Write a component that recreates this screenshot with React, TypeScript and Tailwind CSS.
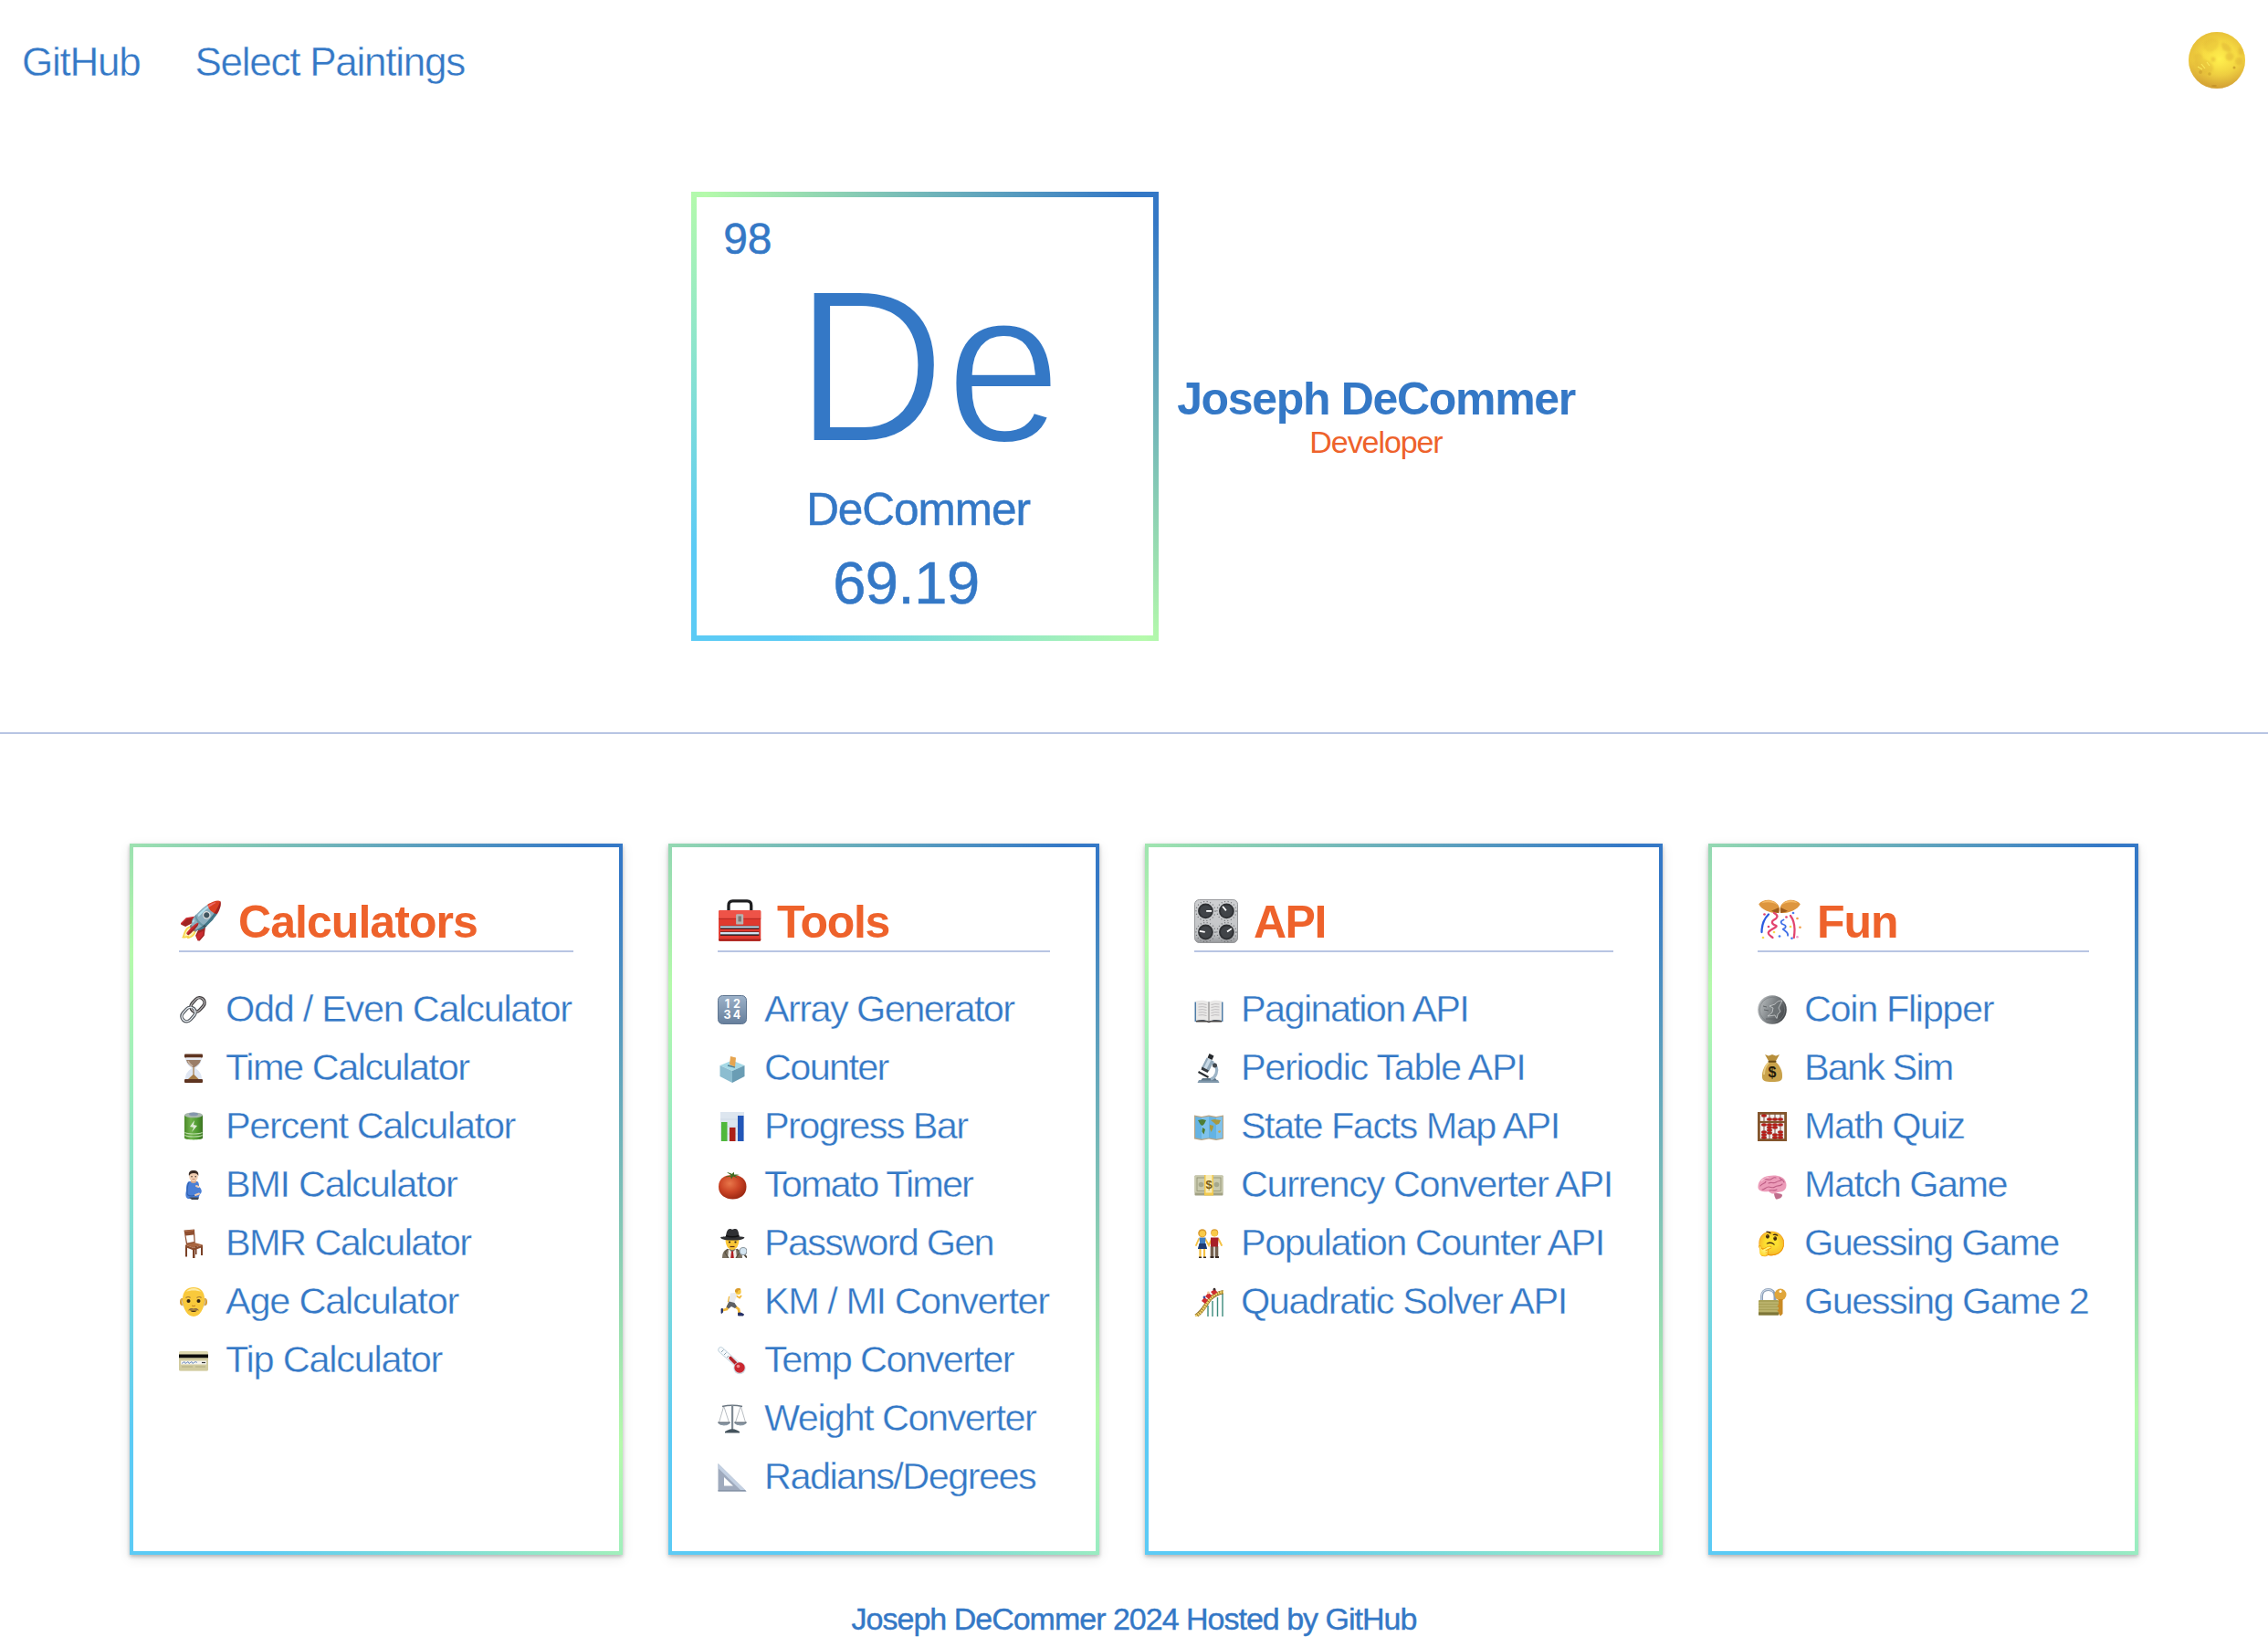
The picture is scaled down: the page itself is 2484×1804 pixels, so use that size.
import type { ReactNode } from 'react';

function Svg({ children, className = 'size-8' }: { children: ReactNode; className?: string }) {
  return (
    <svg viewBox="0 0 32 32" className={className} aria-hidden="true">
      {children}
    </svg>
  );
}

function Moon() {
  return (
    <svg viewBox="0 0 62 62" className="size-[62px]" aria-label="Full moon">
      <defs>
        <linearGradient id="moonBase" x1="0" y1="0" x2="0" y2="1">
          <stop offset="0" stopColor="#f0cf3c" />
          <stop offset="0.5" stopColor="#f7da42" />
          <stop offset="1" stopColor="#cf9c35" />
        </linearGradient>
        <radialGradient id="moonGlow" cx="0.55" cy="0.48" r="0.5">
          <stop offset="0" stopColor="#fff04e" />
          <stop offset="0.6" stopColor="#f8df45" stopOpacity="0.5" />
          <stop offset="1" stopColor="#d9a835" stopOpacity="0.4" />
        </radialGradient>
        <filter id="moonSoft"><feGaussianBlur stdDeviation="1.1" /></filter>
        <clipPath id="moonClip"><circle cx="31" cy="31" r="31" /></clipPath>
      </defs>
      <g clipPath="url(#moonClip)">
        <rect width="62" height="62" fill="url(#moonBase)" />
        <rect width="62" height="62" fill="url(#moonGlow)" />
        <g filter="url(#moonSoft)" fill="#dcb034" opacity="0.5">
          <path d="M17 11c4-5 12-5 16-1 1 5-3 10-8 12-6 1-10-5-8-11Z" opacity="0.6" />
          <path d="M6 26c4-5 9-3 10 3 4 2 10 4 11 10 1 5-5 8-10 6-5-1-8-6-10-10Z" opacity="0.75" />
          <path d="M36 12c5-1 10 3 11 9-3 2-8 0-10-3Z" />
          <circle cx="45" cy="27" r="4.5" />
          <ellipse cx="57" cy="21" rx="2.5" ry="4" />
          <circle cx="55" cy="32" r="4" />
          <circle cx="27" cy="30" r="2.5" />
        </g>
        <g fill="#b98924" opacity="0.6">
          <circle cx="50" cy="39" r="1.5" />
          <circle cx="13" cy="44" r="2" opacity="0.6" />
          <circle cx="23" cy="46" r="1.8" opacity="0.6" />
          <ellipse cx="28" cy="59" rx="3" ry="1" />
        </g>
        <path d="m14 35 4 5M20 33l3 4M10 38l5 3" stroke="#fae85a" strokeWidth="1.2" />
      </g>
    </svg>
  );
}

const art: Record<string, ReactNode> = {
  link: (
    <Svg>
      <g fill="none" strokeWidth="3.6">
        <rect x="-8.5" y="-5.5" width="17" height="11" rx="5.5" transform="translate(20.5 10.5) rotate(-48)" stroke="#3f3b3c" />
        <rect x="-8.5" y="-5.5" width="17" height="11" rx="5.5" transform="translate(10.5 21) rotate(-48)" stroke="#50565c" />
      </g>
      <g fill="none" strokeWidth="1.2">
        <rect x="-8.5" y="-5.5" width="17" height="11" rx="5.5" transform="translate(20.5 10.5) rotate(-48)" stroke="#b9b6b8" />
        <rect x="-8.5" y="-5.5" width="17" height="11" rx="5.5" transform="translate(10.5 21) rotate(-48)" stroke="#f2f7fc" />
      </g>
    </Svg>
  ),
  hourglass: (
    <Svg>
      <path d="M7 4h18c0 6-3 9-7 12 4 3 7 6 7 12H7c0-6 3-9 7-12-4-3-7-6-7-12Z" fill="#dfe6f2" />
      <path d="M8 7h16c-1 4-4 6-7 8h-2C12 13 9 11 8 7Z" fill="#9a7d67" />
      <path d="M10 8c1 3 3 4 5 6" stroke="#c9b5a4" strokeWidth="1.5" fill="none" />
      <path d="M15.4 15h1.2v8l5 5H10l5.4-5Z" fill="#a57b45" />
      <rect x="6" y="0.5" width="20" height="4" rx="1" fill="#5e3420" />
      <rect x="8" y="4.5" width="16" height="1.2" fill="#f2eeee" />
      <rect x="6" y="28" width="20" height="4" rx="1" fill="#5e3420" />
    </Svg>
  ),
  battery: (
    <Svg>
      <defs>
        <linearGradient id="bat" x1="0" x2="1">
          <stop offset="0" stopColor="#4c8a2b" /><stop offset="0.35" stopColor="#6fb24a" />
          <stop offset="0.7" stopColor="#4f9a30" /><stop offset="1" stopColor="#3c7422" />
        </linearGradient>
      </defs>
      <path d="M6 3.5v25C6 31 26 31 26 28.500v-25Z" fill="url(#bat)" />
      <ellipse cx="16" cy="3.4" rx="10" ry="2.900" fill="#a9b8ae" />
      <ellipse cx="16" cy="2.400" rx="5" ry="1.800" fill="#8597ad" />
      <path d="m17 9-5 7 4 1-2 5 6-7-4-1Z" fill="#dcead4" />
      <path d="M6.500 22.500c4 2 15 2 19 0M6.500 25.500c4 2 15 2 19 0" stroke="#b9dba6" strokeWidth="1.200" fill="none" />
    </Svg>
  ),
  pregnant: (
    <Svg>
      <path d="M11 12h9c2 1 2 4 2 6 3 2 4 6 1 8l-2 5H10c-3-1-3-5-2-9 0-4 0-8 3-10Z" fill="#4a7fd6" />
      <path d="M11 13c-2 3-2 8-2 12 0 2 2 3 5 3l6-1" stroke="#2f5fae" strokeWidth="1.1" fill="none" />
      <path d="M13 10h6v3q-3 2-6 0Z" fill="#d9ab8c" />
      <ellipse cx="16" cy="6.500" rx="4.800" ry="5.500" fill="#f0cdb2" />
      <path d="M11 6C10 1 13 0 16 0s6 1 5.200 6c-1-2-2-3-5-3s-4 1-5.200 3Z" fill="#3a2b26" />
      <circle cx="14" cy="6.800" r="0.700" fill="#30231e" /><circle cx="18.200" cy="6.800" r="0.700" fill="#30231e" />
      <path d="M14.500 9.500h3" stroke="#b87e6a" strokeWidth="0.800" />
      <path d="m19 17 2.500 1M18 27l4-1.500" stroke="#f0cdb2" strokeWidth="2" strokeLinecap="round" />
      <path d="M11 29.500h11l-1 2.500h-7Z" fill="#404855" />
    </Svg>
  ),
  chair: (
    <Svg>
      <path d="M5.500 1.500 17 .5l.8 15L8 17.500Z" fill="#8f4f30" />
      <path d="m7.500 7.500 8.500-1 .5 7.500-7.500 1.500Z" fill="#fff" />
      <path d="m6.500 2.500 9.500-1" stroke="#b87450" />
      <path d="m7 17.500 10-2.500 9 2.500-10 3.500Z" fill="#a9653f" />
      <path d="M7 18h2v12.500H7ZM15 21h2.500v11H15ZM24 18.500h2V29h-2ZM18 19h1.500v9H18Z" fill="#7a4126" />
      <path d="m7 17.500 9 3.500 10-3.500V20l-10 3.500L7 20Z" fill="#8a4c2d" />
    </Svg>
  ),
  oldman: (
    <Svg>
      <ellipse cx="3.500" cy="16" rx="2.500" ry="4" fill="#d99a2b" />
      <ellipse cx="28.500" cy="16" rx="2.500" ry="4" fill="#d99a2b" />
      <path d="M4 13C4 4 9 0 16 0s12 4 12 13c0 10-5 19-12 19S4 23 4 13Z" fill="#f9c93c" />
      <path d="M8 5c2-3 5-4 8-4s6 1 8 4c-4-2-12-2-16 0Z" fill="#fdeaa2" />
      <path d="M3 12c1 5 2 8 3 11l-2-3c-1-3-2-6-1-8ZM29 12c-1 5-2 8-3 11l2-3c1-3 2-6 1-8Z" fill="#cfc6b2" />
      <circle cx="10.500" cy="15" r="2" fill="#2e2215" /><circle cx="21.500" cy="15" r="2" fill="#2e2215" />
      <path d="M7.500 11.500q3-2 5 0M19.500 11.500q3-2 5 0" stroke="#a67c38" strokeWidth="1.200" fill="none" />
      <path d="M14 20q2 1.500 4 0" stroke="#c07d1f" fill="none" />
      <path d="M10 25.500c2-3 4-2.500 6-2 2-.5 4-1 6 2-3-1-9-1-12 0Z" fill="#8d6c43" />
      <path d="M12 25.500h8q-4 3-8 0Z" fill="#3b2414" />
    </Svg>
  ),
  card: (
    <Svg>
      <rect x="0" y="6" width="32" height="21.500" rx="1.500" fill="#dcd7ae" />
      <path d="M0 14h32v12a1.500 1.500 0 0 1-1.500 1.500h-29A1.500 1.500 0 0 1 0 26Z" fill="#c9c394" opacity="0.6" />
      <rect y="9.500" width="32" height="3.800" fill="#0d0d0b" />
      <rect x="2" y="16.500" width="28" height="4" fill="#f5f4ee" />
      <path d="m3 19.500 3-2 1 2 3-2 1 2 3-2 1 2 3-2 2 1" stroke="#6c8bc0" strokeWidth="0.900" fill="none" />
      <path d="M25 18.500h4" stroke="#333" strokeWidth="1.200" />
      <path d="M3 23h12M18 23h11" stroke="#a9a47d" strokeWidth="0.800" />
    </Svg>
  ),
  toolbox: (
    <Svg className="size-12">
      <path d="M8 8V4.500C8 2 9 1.200 11 1.200h10.500c2 0 3 .8 3 3.300V8" stroke="#1d1d1f" strokeWidth="2.200" fill="none" />
      <rect x="0.700" y="8" width="30.800" height="22.500" rx="1" fill="#e0392f" />
      <path d="M.7 9a1 1 0 0 1 1-1h28.800a1 1 0 0 1 1 1v5H.7Z" fill="#ee5348" />
      <path d="M.7 14.200h30.800" stroke="#a32019" strokeWidth="0.500" />
      <rect x="2" y="19.300" width="28.200" height="2.400" fill="#16181d" /><rect x="2" y="19.600" width="28.200" height="1.300" fill="#cfe0ee" />
      <rect x="2" y="23.700" width="28.200" height="2.800" fill="#16181d" /><rect x="2" y="24" width="28.200" height="1.600" fill="#cfe0ee" />
      <rect x="13.400" y="10.800" width="5.400" height="7.600" rx="0.800" fill="#b7b3b1" /><rect x="15" y="12.300" width="2.300" height="4" fill="#7d7774" />
      <path d="M.7 29h30.800v.5a1 1 0 0 1-1 1H1.700a1 1 0 0 1-1-1Z" fill="#a8211a" />
    </Svg>
  ),
  numbers: (
    <Svg>
      <defs>
        <linearGradient id="num" x1="0" y1="0" x2="0" y2="1">
          <stop offset="0" stopColor="#9db2c9" /><stop offset="1" stopColor="#667f9c" />
        </linearGradient>
      </defs>
      <rect x="0.500" y="0.500" width="31" height="31" rx="5" fill="url(#num)" stroke="#5f7590" />
      <g fill="#fff" fontFamily="Inter, sans-serif" fontWeight="700" fontSize="12.500" textAnchor="middle">
        <text x="10.500" y="14.300">1</text><text x="21" y="14.300">2</text>
        <text x="10.500" y="26.300">3</text><text x="21" y="26.300">4</text>
      </g>
    </Svg>
  ),
  ballot: (
    <Svg>
      <path d="M16 7.500 29.500 13 16 19 2.500 13Z" fill="#a5d9e6" />
      <path d="M2.500 13 16 19v13L2.500 25Z" fill="#8cbdd0" />
      <path d="M29.500 13 16 19v13l13.500-7Z" fill="#6a9db4" />
      <path d="m11 13 8 2" stroke="#4e7d91" strokeWidth="1.500" />
      <path d="m14 3 6 1.500-1 10-6-2.500Z" fill="#e6a550" />
    </Svg>
  ),
  bars: (
    <Svg>
      <rect x="3" y="0" width="26" height="32" fill="#dde6ef" />
      <path d="M3 8h26M3 16h26M3 24h26" stroke="#c8d3df" strokeWidth="0.600" />
      <rect x="4" y="11" width="6.500" height="21" fill="#4fb83c" />
      <rect x="13" y="17" width="6.500" height="15" fill="#ac2017" />
      <rect x="22" y="4" width="6.500" height="28" fill="#2356b8" />
    </Svg>
  ),
  tomato: (
    <Svg>
      <defs>
        <radialGradient id="tom" cx="0.400" cy="0.350" r="0.700">
          <stop offset="0" stopColor="#e8774a" /><stop offset="0.500" stopColor="#cc4526" /><stop offset="1" stopColor="#96240f" />
        </radialGradient>
      </defs>
      <path d="M1 18C1 9 7 5 16 5s15.500 4 15.500 13S24 31.500 16.500 31.500 1 27 1 18Z" fill="url(#tom)" />
      <path d="M15 6c-1-2-4-3-5-4 2 0 4 1 6 2 0-1 1-2 2-2l0 2.500c2 0 4-.5 6 .5-2 0-3 1-5 1l3 2.500-5-2-2 3-1-3c-2 0-3 1-6 1 2-1 4-2 7-2Z" fill="#3f6b22" />
    </Svg>
  ),
  detective: (
    <Svg>
      <path d="M5 32c0-6 2-9 6-10h10c4 1 6 4 6 10Z" fill="#7c7263" />
      <path d="m12 22 4 4 4-4 1 10H11Z" fill="#f0efec" />
      <path d="m15 25 1-1 1 1 .8 7h-3.600Z" fill="#b01f24" />
      <path d="m11 22-3 4 4 6M21 22l3 4-4 6" stroke="#57503f" strokeWidth="1.200" fill="none" />
      <path d="M8.500 11h15c0 7-3 12-7.500 12s-7.500-5-7.500-12Z" fill="#f9c534" />
      <circle cx="13" cy="14.500" r="1.100" fill="#2b2119" /><circle cx="19.500" cy="14.500" r="1.100" fill="#2b2119" />
      <path d="M13.500 19.500h5" stroke="#5d2f16" strokeWidth="1.200" />
      <path d="M3 9.500C5 8 8 9 9 8c.5-5 2-8 4.500-8 1 0 1.500.7 2.500.7S18 0 19.500 0C22 0 23 3 23.500 8c1 1 4 0 6 1.500-1 2.500-7 3-13 3S4 12 3 9.500Z" fill="#2f3033" />
      <path d="M9 7.500q7 2.500 14.500 0" stroke="#111" strokeWidth="1.500" fill="none" />
      <path d="m29 28 3 3.500" stroke="#4b4338" strokeWidth="1.800" />
      <circle cx="28" cy="24.500" r="4" fill="#d5e6f2" stroke="#8c979e" strokeWidth="1.200" />
    </Svg>
  ),
  runner: (
    <Svg>
      <path d="m13 18-3 6-6 1.500" stroke="#f2b93a" strokeWidth="2.800" fill="none" />
      <path d="m18 20 5 4 1 5.500" stroke="#f2b93a" strokeWidth="2.800" fill="none" />
      <path d="m13 10-1 5 5-2M19 8.500l5 3 2-2.500" stroke="#f2b93a" strokeWidth="2" fill="none" />
      <path d="m14 6.500 5-.5 2 3-3 8.500-6-1.500Z" fill="#e8eaee" />
      <path d="m12.500 15.500 6 1.500 2.500 4-2 2-4-2-3 2.500-2.500-2Z" fill="#5e6064" />
      <circle cx="22.500" cy="4.800" r="3.200" fill="#f6c640" />
      <path d="M19 5c-.5-3 2-4.500 4.500-4 2 .3 2 1.500 1.500 2-2 0-3 .5-3.500 3Z" fill="#d99b2c" />
      <path d="M4 23.500h1.500v4L4 28.500ZM22.500 28h3l3 1.500-.5 1.500h-5.500Z" stroke="#1f2a5c" strokeWidth="0.800" fill="#26336e" />
    </Svg>
  ),
  thermometer: (
    <Svg>
      <path d="M3.500 4.500 22 21" stroke="#c9d8e2" strokeWidth="6.500" strokeLinecap="round" />
      <path d="M3.500 4.500 22 21" stroke="#f7fafc" strokeWidth="4.500" strokeLinecap="round" />
      <path d="m14 13.500 9 9" stroke="#b3242a" strokeWidth="3.600" strokeLinecap="round" />
      <path d="m4 7 2.500-2.500M7 10l2.500-2.500M10 13l2-2" stroke="#7f98a8" strokeWidth="0.900" />
      <circle cx="24" cy="24.500" r="6.700" fill="#cfdbe3" />
      <circle cx="24" cy="24" r="5.700" fill="#cb2730" />
      <circle cx="22.500" cy="22.500" r="1.800" fill="#f08a8e" />
    </Svg>
  ),
  scales: (
    <Svg>
      <path d="M5 2.500q11-2.500 22 0" stroke="#6c7782" strokeWidth="1.300" fill="none" />
      <rect x="15" y="1" width="2.200" height="27" fill="#7f8a94" />
      <path d="M6.500 3 1.500 20M7 3l5.500 17M25 3l-5.500 17M25.500 3l5 17" stroke="#9aa1a8" strokeWidth="0.700" fill="none" />
      <path d="M.3 20h13.400c-1 4.500-12.400 4.500-13.400 0ZM18.300 20h13.400c-1 4.500-12.400 4.500-13.400 0Z" fill="#8b98a4" />
      <path d="M.3 20h13.400M18.300 20h13.400" stroke="#4d5862" strokeWidth="0.900" />
      <path d="M11 28.500q5-2.500 10 0l3 1.500v1.500H8V30Z" fill="#44535d" />
    </Svg>
  ),
  ruler: (
    <Svg>
      <path fillRule="evenodd" d="M.5 1 31.500 31.500H.5ZM7 16v9.500h10Z" fill="#9faabd" />
      <path d="M.5 1 31.500 31.500h-5L.5 6Z" fill="#c3d0e2" />
      <path d="M.5 30h29.500l1.500 1.500H.5Z" fill="#8794a8" />
    </Svg>
  ),
  knobs: (
    <Svg className="size-12">
      <defs>
        <linearGradient id="knb" x1="0" y1="0" x2="0" y2="1">
          <stop offset="0" stopColor="#cfd0d2" /><stop offset="0.800" stopColor="#c2c4c6" /><stop offset="1" stopColor="#97999c" />
        </linearGradient>
      </defs>
      <rect x="0.300" y="0.300" width="31.400" height="31.400" rx="3.500" fill="url(#knb)" stroke="#8b8c8e" strokeWidth="0.600" />
      {[[8.300, 8.600, 0], [23.600, 8.600, -130], [8.300, 24, -170], [23.600, 24, -35]].map(([x, y, a]) => (
        <g key={`${x}-${y}`}>
          <circle cx={x} cy={y} r="7" fill="none" stroke="#6d6f72" strokeWidth="0.800" strokeDasharray="0.700 1.700" />
          <circle cx={x} cy={y} r="5.600" fill="#2f3134" />
          <circle cx={x} cy={y} r="4.300" fill="#414448" />
          <path d="M.5 0h4" transform={`translate(${x} ${y}) rotate(${a})`} stroke="#fff" strokeWidth="1.200" />
        </g>
      ))}
    </Svg>
  ),
  confetti: (
    <Svg className="size-12">
      <path d="M.8 3.500C4-.5 12-1 15.500 5c.8 2 .5 4 0 5C10 10.500 3 8 .8 3.500Z" fill="#dd963f" />
      <path d="M31.200 3.500C28-.5 20-1 16.800 5c-.8 2-.5 4 0 5 5.200.5 12.200-2 14.400-6.500Z" fill="#dd963f" />
      <path d="M3 2.800C6-.2 12 .5 14.500 4 11 2 7 1.800 3 2.800ZM29 2.800C26-.2 20 .5 17.800 4c3.200-2 7.200-2.200 11.200-1.200Z" fill="#f2b966" />
      <path d="M10 8.500c2 1 4 1.300 5.500 1.500V6ZM22 8.500c-2 1-4 1.300-5.200 1.500V6Z" fill="#9a5a1c" />
      <g fill="none" strokeLinecap="round" strokeWidth="1.500">
        <path d="M8 11c-3 3-5 8-5 13" stroke="#2b5be0" />
        <path d="M12 10c4 2 2 4 0 5s-2 3 1 4-4 3-5 5 2 3 3 4" stroke="#e2456f" />
        <path d="M19 15c-3 1-2 3 0 3.500s2 2.500 0 3 4 2 3 5" stroke="#3f6fe6" strokeWidth="1.200" />
        <path d="M24 12c3 4 3.500 10 2.500 16" stroke="#e2456f" />
      </g>
      {[[5, 11, '#e2456f'], [21, 13, '#e2456f'], [29, 14, '#f3a04b'], [8, 20, '#e2456f'], [31, 20.500, '#f3a04b'], [4, 28, '#f6d94c'], [16, 27, '#4a7df0'], [25, 28.500, '#4a7df0'], [29, 27.500, '#f09ad0'], [24, 20, '#f6d94c'], [26, 10, '#4a7df0'], [12, 24, '#f6d94c']].map(([x, y, c]) => (
        <circle key={`${x}-${y}`} cx={x} cy={y} r="0.900" fill={c as string} />
      ))}
    </Svg>
  ),
  book: (
    <Svg>
      <path d="M.5 7.500h31V29h-31Z" fill="#4e7ca6" />
      <path d="M2 6.500c5-1.500 10-1 14 1 4-2 9-2.500 14-1V28c-5-1-10-1-14 1-4-2-9-2-14-1Z" fill="#e9e8e7" />
      <path d="M16 7.500V29" stroke="#8d8b8b" strokeWidth="1.200" />
      <path d="M4.500 10q5-1 9 .5M4.500 13q5-1 9 .5M4.500 16q5-1 9 .5M4.500 19q5-1 9 .5M4.500 22q5-1 9 .5M27.500 10q-5-1-9 .5M27.500 13q-5-1-9 .5M27.500 16q-5-1-9 .5M27.500 19q-5-1-9 .5M27.500 22q-5-1-9 .5" stroke="#b5b3b5" strokeWidth="0.800" fill="none" />
      <path d="M2 28c5-1.200 10-1 14 .8 4-1.800 9-2 14-.8v1.500H18q-2 1.500-4 0H2Z" fill="#474443" />
    </Svg>
  ),
  microscope: (
    <Svg>
      <path d="M5 29h21l1.500 3h-24Z" fill="#7f97ab" />
      <path d="M9 27h14l2 2.500H7Z" fill="#5f7688" />
      <path d="M19 10c5 2 7 7 5 12-1 3-3 5-6 6" stroke="#9db4c6" strokeWidth="3.200" fill="none" />
      <path d="m5 19 11 6-1 2-11-6Z" fill="#2b2f33" />
      <path d="m13.500 4.500 8 4-5.500 11-8-4Z" fill="#93a9ba" />
      <path d="m15.500 5.500 3 1.500-5.500 11-3-1.500Z" fill="#c8d9e6" />
      <path d="m8.500 14.500 7.500 4-1.500 2.500-7-3.500Z" fill="#33383d" />
      <path d="m16.500 0 5 2.500-2 4.500-5-2.500Z" fill="#26292d" />
      <circle cx="22.500" cy="13" r="2.500" fill="#43494f" />
    </Svg>
  ),
  map: (
    <Svg>
      <path d="M0 3.500 8 5l8-1.500L24 5l8-1.500v26L24 31l-8-1.500L8 31l-8-1.500Z" fill="#b8a585" />
      <path d="M1.200 5 8 6.300 16 5l8 1.300L30.800 5v23.200L24 29.500l-8-1.300-8 1.300-6.800-1.300Z" fill="#63b3e4" />
      <path d="M8 6.300 16 5v23.200l-8 1.300ZM24 6.300 30.800 5v23.200L24 29.500Z" fill="#8ac9ef" opacity="0.700" />
      <path d="m4 9 5-1 4 1-2 4-2 2-2-1ZM9 17l3 2-1.500 5.500-2-3Z" fill="#4d7d34" />
      <path d="m18 9 4-1 7 1-2 4-3 1-2-2ZM17 14l4 1-.5 3-2 4-1.500-4Z" fill="#a8993f" />
      <path d="m26 21 2.500-1 .5 2-2 1Z" fill="#d9a53a" />
    </Svg>
  ),
  money: (
    <Svg>
      <rect x="0.500" y="5.500" width="31" height="22" rx="0.800" fill="#a2a284" />
      <rect x="0.500" y="5.500" width="31" height="19" rx="0.800" fill="#c9caae" />
      <rect x="3" y="8" width="26" height="14.500" fill="none" stroke="#8e9072" strokeWidth="0.800" />
      <circle cx="7.500" cy="15.500" r="2.800" fill="#a5a88b" /><circle cx="24.500" cy="15.500" r="2.800" fill="#a5a88b" />
      <rect x="11" y="5" width="10" height="22.500" fill="#f2c94c" /><rect x="12.500" y="5" width="7" height="19.500" fill="#f8ecb5" />
      <text x="16" y="20" textAnchor="middle" fontSize="13" fontWeight="700" fontFamily="Liberation Sans" fill="#7a5c12">$</text>
    </Svg>
  ),
  couple: (
    <Svg>
      <path d="M6.500 20v11M11 20v11" stroke="#f5c242" strokeWidth="2.200" />
      <path d="M19.500 19v11.500M24.500 19v11.500" stroke="#75614f" strokeWidth="3.600" />
      <path d="M5 11 2 18M12 11l4 7 3-7M26.500 11l3.500 7" stroke="#f5c242" strokeWidth="1.900" fill="none" strokeLinecap="round" />
      <path d="M5.500 9.500h7L12 15l2 7H4l2-7Z" fill="#3e7ec2" />
      <path d="m5.500 16h7l1.500 6H4Z" fill="#1e3d73" />
      <path d="M18 9.500h8.500L26 19.500h-8Z" fill="#a81f26" />
      <circle cx="8.800" cy="4.800" r="4.600" fill="#d99c30" /><circle cx="9" cy="5.300" r="3.200" fill="#f9cb48" />
      <circle cx="22.200" cy="4.300" r="4" fill="#d99c30" /><circle cx="22.200" cy="5" r="3.400" fill="#f9cb48" />
      <path d="M5 30.500h3v1.500H5ZM10 30.500h3v1.500h-3ZM17.500 30h4v2h-4ZM23 30h4v2h-4Z" fill="#3a2d26" />
    </Svg>
  ),
  coaster: (
    <Svg>
      <path d="M15 20v12M20 15v17M25.500 11v21M31 7v25" stroke="#3c8c7c" strokeWidth="1.400" />
      <path d="M1.500 31.500C10 27 13 17 18 12s9-6 14-7" stroke="#8a6a24" strokeWidth="4.200" fill="none" />
      <path d="M1.500 31.500C10 27 13 17 18 12s9-6 14-7" stroke="#efd26b" strokeWidth="3" fill="none" strokeDasharray="2 0.700" />
      <path d="m8 15 3-4 4 3-3 4ZM12 10l3.500-4 4 3-3.500 4ZM18 5l4.500-3 3 3.500-4.500 3Z" fill="#cf2c30" />
      <circle cx="11" cy="11" r="1.400" fill="#3a4a9c" /><circle cx="15.500" cy="6" r="1.400" fill="#f3c79b" /><circle cx="22" cy="2.200" r="1.400" fill="#3d2d2d" />
    </Svg>
  ),
  coin: (
    <Svg>
      <defs>
        <linearGradient id="coi" x1="0" y1="0" x2="1" y2="0.400">
          <stop offset="0" stopColor="#c2c5c7" /><stop offset="0.450" stopColor="#8f9497" /><stop offset="1" stopColor="#4a4d50" />
        </linearGradient>
      </defs>
      <circle cx="16" cy="16" r="15.800" fill="url(#coi)" />
      <circle cx="16" cy="16" r="13.800" fill="none" stroke="#777c7f" strokeWidth="0.700" />
      <path d="M27 6c-4 0-6 1-8 4l-6 2 4 2-1 5-5 4 8-1 2 4 1-5 3-3-2-4Z" fill="#6d7275" stroke="#d6d8da" strokeWidth="0.700" />
      <path d="m6 12 4 1M7 16l5 1M9 26h14" stroke="#5e6366" />
    </Svg>
  ),
  bag: (
    <Svg>
      <path d="m8 1 4 1.500L16 1l4 1.500L24 1l-4.500 8h-7Z" fill="#b78f3b" />
      <path d="M12.500 9h7c5 4 8 10 7.500 17-.3 4-3 5-11 5s-10.700-1-11-5C4.500 19 7.500 13 12.500 9Z" fill="#c9a24b" />
      <path d="M12 10c-4 4-5 8-5 13" stroke="#e8ca80" strokeWidth="1.800" fill="none" />
      <rect x="11.500" y="7.800" width="9" height="2" rx="1" fill="#6b4d17" />
      <text x="16" y="26" textAnchor="middle" fontSize="16" fontWeight="700" fontFamily="Liberation Sans" fill="#241a0a">$</text>
    </Svg>
  ),
  abacus: (
    <Svg>
      <rect x="1.400" y="1.400" width="29.200" height="29.200" fill="#f3eeec" stroke="#83552c" strokeWidth="2.800" />
      <path d="M7 2v28M13 2v28M19 2v28M25 2v28" stroke="#7a4a40" strokeWidth="1" />
      <path d="M1 11h30" stroke="#83552c" strokeWidth="2.200" />
      <g fill="#c01f19" stroke="#7d1510" strokeWidth="0.400">
        {[[7, 4], [13, 8], [19, 8], [25, 8], [7, 14], [7, 22], [7, 25], [7, 28], [13, 14], [13, 17], [13, 20], [13, 23], [19, 14], [19, 17], [19, 25], [19, 28], [25, 14], [25, 22], [25, 25], [25, 28]].map(([x, y]) => (
          <rect key={`${x}-${y}`} x={x - 2.600} y={y - 1.300} width="5.200" height="2.600" rx="0.900" />
        ))}
      </g>
    </Svg>
  ),
  brain: (
    <Svg>
      <path d="M18 25c3 0 8 0 9 2 0 3-4 4.500-7 4.500-1-2-2-4-2-6.500Z" fill="#c06d8c" />
      <path d="M.5 19C0 12 5 7 12 6c8-1.500 17 0 19 7 1.500 5-.5 9-4 10-3 1-5 .5-7 2-3 1.500-6 0-8-2-4 1-11 0-11.500-4Z" fill="#ec9cb9" />
      <g stroke="#bf5f86" strokeWidth="1.100" fill="none" strokeLinecap="round">
        <path d="M3 17c2-3 5-2 6-5M7 9c3 0 4 2 7 1s3-3 6-2M12 14c3-2 5 1 8-1s5-1 7-3M5 21c3 0 4-3 7-3s4 2 7 0 5 0 8-3M13 22c3-1 5 1 8-1M24 8c1 2 4 2 5 5" />
      </g>
      <path d="M4 12c2-3 5-4 8-4.500" stroke="#f8c6d7" strokeWidth="1.200" fill="none" />
    </Svg>
  ),
  lock: (
    <Svg>
      <path d="M4.500 15V10C4.500 0 19 0 19 10v5" stroke="#8da0b8" strokeWidth="3" fill="none" />
      <path d="M4.200 15V10C4.500 2 13 .5 17 5" stroke="#c9d6e6" strokeWidth="1.100" fill="none" />
      <rect x="1" y="14" width="22" height="16.500" rx="1" fill="#a9a158" />
      <path d="M1 17h22M1 20h22M1 23h22M1 26h22" stroke="#c8c07c" strokeWidth="1" />
      <rect x="1" y="27.500" width="22" height="3" fill="#7d7538" />
      <circle cx="25" cy="8" r="6.500" fill="#e0a63b" /><circle cx="25" cy="4.500" r="1.500" fill="#fff" />
      <path d="M23 13h4.500v16L25 31.500 23 29v-2l-1.500-1.500L23 24v-2l-1.500-1.500L23 19Z" fill="#c98a25" />
    </Svg>
  ),
};

type IconProps = { art?: string; emoji?: string };

function ItemIcon({ art: name, emoji }: IconProps) {
  return (
    <span className="mt-1 flex size-8 shrink-0 items-center justify-center font-['Noto_Color_Emoji'] text-[26px] leading-none">
      {name ? art[name] : emoji}
    </span>
  );
}

type Item = IconProps & { label: string; tracking: string };
type Section = { title: string; titleTracking: string; width: string; art?: string; emoji?: string; items: Item[] };

const sections: Section[] = [
  {
    title: 'Calculators', titleTracking: 'tracking-[-0.95px]', width: 'w-[540px]', emoji: '🚀',
    items: [
      { label: 'Odd / Even Calculator', tracking: 'tracking-[-1.3px]', art: 'link' },
      { label: 'Time Calculator', tracking: 'tracking-[-1.5px]', art: 'hourglass' },
      { label: 'Percent Calculator', tracking: 'tracking-[-1.35px]', art: 'battery' },
      { label: 'BMI Calculator', tracking: 'tracking-[-1.33px]', art: 'pregnant' },
      { label: 'BMR Calculator', tracking: 'tracking-[-1.57px]', art: 'chair' },
      { label: 'Age Calculator', tracking: 'tracking-[-1.22px]', art: 'oldman' },
      { label: 'Tip Calculator', tracking: 'tracking-[-1.24px]', art: 'card' },
    ],
  },
  {
    title: 'Tools', titleTracking: 'tracking-[-1.33px]', width: 'w-[472px]', art: 'toolbox',
    items: [
      { label: 'Array Generator', tracking: 'tracking-[-1.6px]', art: 'numbers' },
      { label: 'Counter', tracking: 'tracking-[-1.7px]', art: 'ballot' },
      { label: 'Progress Bar', tracking: 'tracking-[-1.65px]', art: 'bars' },
      { label: 'Tomato Timer', tracking: 'tracking-[-1.95px]', art: 'tomato' },
      { label: 'Password Gen', tracking: 'tracking-[-1.78px]', art: 'detective' },
      { label: 'KM / MI Converter', tracking: 'tracking-[-1.48px]', art: 'runner' },
      { label: 'Temp Converter', tracking: 'tracking-[-1.58px]', art: 'thermometer' },
      { label: 'Weight Converter', tracking: 'tracking-[-1.56px]', art: 'scales' },
      { label: 'Radians/Degrees', tracking: 'tracking-[-1.56px]', art: 'ruler' },
    ],
  },
  {
    title: 'API', titleTracking: 'tracking-[-1.5px]', width: 'w-[567px]', art: 'knobs',
    items: [
      { label: 'Pagination API', tracking: 'tracking-[-1.65px]', art: 'book' },
      { label: 'Periodic Table API', tracking: 'tracking-[-1.37px]', art: 'microscope' },
      { label: 'State Facts Map API', tracking: 'tracking-[-1.56px]', art: 'map' },
      { label: 'Currency Converter API', tracking: 'tracking-[-1.43px]', art: 'money' },
      { label: 'Population Counter API', tracking: 'tracking-[-1.53px]', art: 'couple' },
      { label: 'Quadratic Solver API', tracking: 'tracking-[-1.42px]', art: 'coaster' },
    ],
  },
  {
    title: 'Fun', titleTracking: 'tracking-[-1.04px]', width: 'w-[471px]', art: 'confetti',
    items: [
      { label: 'Coin Flipper', tracking: 'tracking-[-1.38px]', art: 'coin' },
      { label: 'Bank Sim', tracking: 'tracking-[-1.9px]', art: 'bag' },
      { label: 'Math Quiz', tracking: 'tracking-[-1.5px]', art: 'abacus' },
      { label: 'Match Game', tracking: 'tracking-[-1.54px]', art: 'brain' },
      { label: 'Guessing Game', tracking: 'tracking-[-1.62px]', emoji: '🤔' },
      { label: 'Guessing Game 2', tracking: 'tracking-[-1.54px]', art: 'lock' },
    ],
  },
];

function Card({ section }: { section: Section }) {
  return (
    <section
      className={`${section.width} h-[779px] shrink-0 border-4 px-[50px] pt-[51px] shadow-[0_2px_4px_rgba(0,0,0,0.24),0_4px_12px_rgba(0,0,0,0.1)] [border-image:linear-gradient(45deg,#5ccbf5_10%,#b5faab_50%,#3478c6_97%)_1]`}
    >
      <h2 className="flex h-16 items-start gap-[17px] border-b-2 border-[#b8c5e3] text-[50px] leading-[62px] font-bold text-[#ee622b]">
        <span className="mt-1.5 flex size-12 shrink-0 items-center justify-center font-['Noto_Color_Emoji'] text-[40px] leading-none font-normal">
          {section.art ? art[section.art] : section.emoji}
        </span>
        <span className={section.titleTracking}>{section.title}</span>
      </h2>
      <ul className="mt-[29px]">
        {section.items.map((item) => (
          <li key={item.label} className="flex h-16 items-center gap-[19px]">
            <ItemIcon art={item.art} emoji={item.emoji} />
            <a className={`${item.tracking} pt-0.5 text-[41.5px] leading-[62px] whitespace-nowrap [-webkit-text-stroke:0.4px_#fff]`}>{item.label}</a>
          </li>
        ))}
      </ul>
    </section>
  );
}

export default function App() {
  return (
    <div className="h-[1804px] overflow-hidden bg-white font-['Liberation_Sans',Arial,sans-serif] text-[#3478c6]">
      <header className="flex h-[132px] items-center justify-between pr-[25px] pl-6">
        <nav className="flex gap-[60px] pt-[3px] text-[44px] leading-[60px] [-webkit-text-stroke:0.4px_#fff]">
          <a className="tracking-[-1.25px]">GitHub</a>
          <a className="tracking-[-1.25px]">Select Paintings</a>
        </nav>
        <Moon />
      </header>

      <div className="flex h-[672px] items-start justify-center gap-5 border-b-2 border-[#b8c5e3] pt-[78px] pr-[2px]">
        <div className="h-[492px] w-[512px] border-[6px] pt-[18px] [border-image:linear-gradient(45deg,#5ccbf5_10%,#b5faab_50%,#3478c6_97%)_1]">
          <div className="ml-[29px] text-[48px] leading-[56px] [-webkit-text-stroke:0.5px_#3478c6]">98</div>
          <div className="ml-[108px] origin-left scale-x-95 pt-[3px] text-[240px] leading-[217px] [-webkit-text-stroke:4px_#fff]">De</div>
          <div className="mt-[20px] ml-[120px] text-[49.5px] leading-[56px] tracking-[-1.02px] [-webkit-text-stroke:0.5px_#3478c6]">DeCommer</div>
          <div className="mt-[15px] ml-[149px] text-[65px] leading-[76px] tracking-[-0.4px] [-webkit-text-stroke:0.6px_#3478c6]">69.19</div>
        </div>
        <div className="flex h-[492px] flex-col items-center justify-center">
          <h1 className="text-[50px] leading-[56px] font-bold tracking-[-1.33px]">Joseph DeCommer</h1>
          <p className="text-[34px] leading-[38px] tracking-[-1.08px] text-[#ee622b]">Developer</p>
        </div>
      </div>

      <main className="mt-[120px] flex justify-center gap-[50px]">
        {sections.map((section) => (
          <Card key={section.title} section={section} />
        ))}
      </main>

      <footer className="mt-[50px] text-center text-[34px] leading-10 tracking-[-1px] [-webkit-text-stroke:0.4px_#3478c6]">
        Joseph DeCommer 2024 Hosted by GitHub
      </footer>
    </div>
  );
}
